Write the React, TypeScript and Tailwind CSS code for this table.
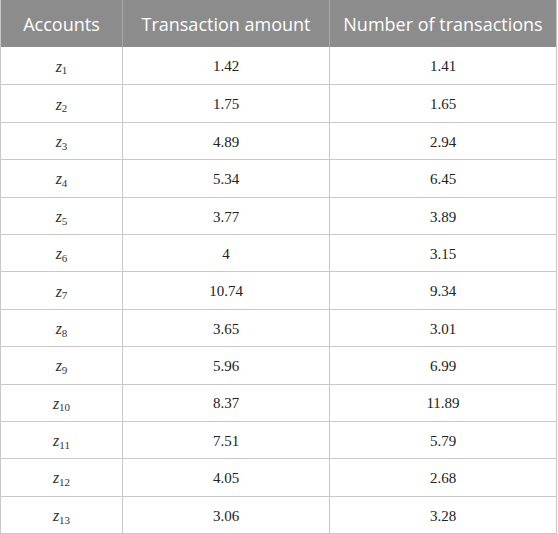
import React from "react";

const rows: [string, string, string][] = [
  ["1", "1.42", "1.41"],
  ["2", "1.75", "1.65"],
  ["3", "4.89", "2.94"],
  ["4", "5.34", "6.45"],
  ["5", "3.77", "3.89"],
  ["6", "4", "3.15"],
  ["7", "10.74", "9.34"],
  ["8", "3.65", "3.01"],
  ["9", "5.96", "6.99"],
  ["10", "8.37", "11.89"],
  ["11", "7.51", "5.79"],
  ["12", "4.05", "2.68"],
  ["13", "3.06", "3.28"],
];

export default function App() {
  return (
    <div className="w-[558px] h-[534px] bg-white">
      <div className="w-[557px] border-l border-r border-b border-[#c8c8c8] flex flex-col">
        <div className="flex h-[47px] bg-[#8c8c8c] text-white text-[18px] font-['Open_Sans',sans-serif]">
          <div className="w-[122px] flex items-center justify-center border-r border-[#a8a8a8] pt-[1px]">Accounts</div>
          <div className="w-[207px] flex items-center justify-center border-r border-[#a8a8a8] pt-[1px]">Transaction amount</div>
          <div className="flex-1 flex items-center justify-center pt-[1px]">Number of transactions</div>
        </div>
        {rows.map((r, i) => (
          <div
            key={i}
            className={i > 0 ? "flex h-[37.4px] border-t border-[#c8c8c8]" : "flex h-[37.4px]"}
          >
            <div className="w-[122px] flex items-center justify-center border-r border-[#c8c8c8] font-['Liberation_Serif',serif] text-[#333] pt-[2px]">
              <span className="italic text-[16px]">z</span>
              <span className="text-[11px] relative top-[4px]">{r[0]}</span>
            </div>
            <div className="w-[207px] flex items-center justify-center border-r border-[#c8c8c8] font-['Liberation_Serif',serif] text-[15px] text-[#222] pt-[2px]">{r[1]}</div>
            <div className="flex-1 flex items-center justify-center font-['Liberation_Serif',serif] text-[15px] text-[#222] pt-[2px]">{r[2]}</div>
          </div>
        ))}
      </div>
    </div>
  );
}
